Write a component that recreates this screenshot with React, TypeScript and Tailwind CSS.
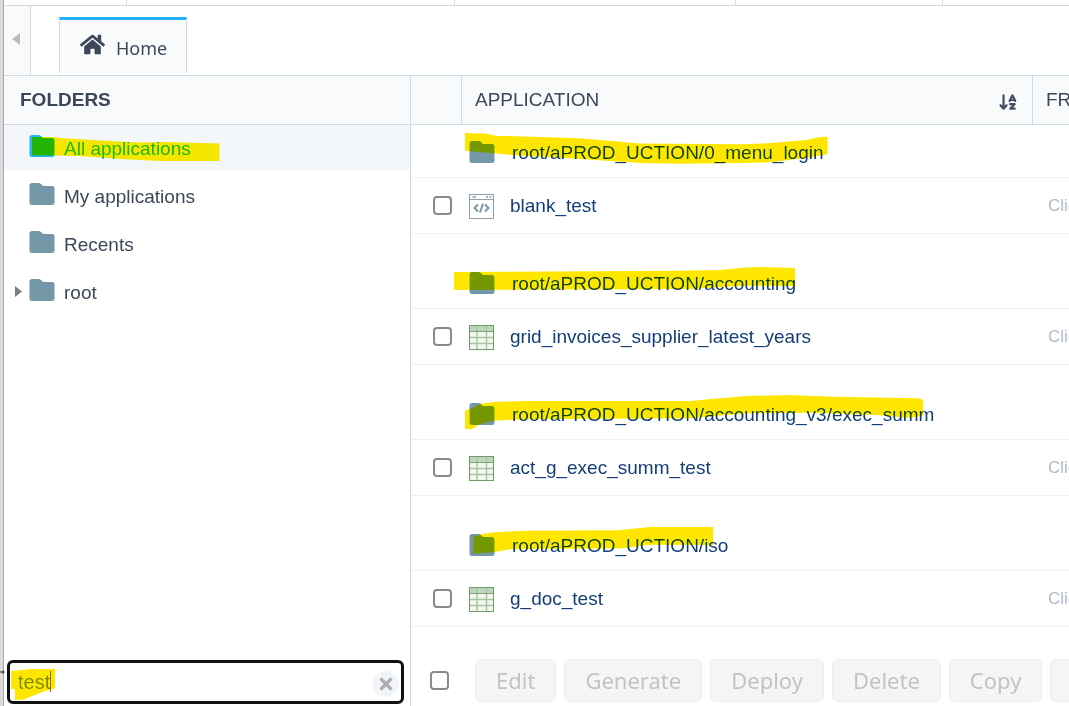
import { useState } from "react";
import { FaHome } from "react-icons/fa";
import { FaArrowDownAZ } from "react-icons/fa6";

type AppKind = "blank" | "grid";

type Group = {
  path: string;
  marker: string;
  app: string;
  kind: AppKind;
};

const folders = ["All applications", "My applications", "Recents", "root"];

const groups: Group[] = [
  {
    path: "root/aPROD_UCTION/0_menu_login",
    marker:
      "M3 8L23 8.5L34 10.7L118 13.3L178 18.5L278 19.3L305 18.3L345 15L358 12L365.5 11.7V29.3L345 32.7L308 37.3L278 38L218 38.7L178 38L118 34L51 30L3 25.7Z",
    app: "blank_test",
    kind: "blank",
  },
  {
    path: "root/aPROD_UCTION/accounting",
    marker:
      "M-8 16L218 14.7L258 14L281 11.7L298 11L333 12V30L281 29.7L248 31.7L228 33L-8 34Z",
    app: "grid_invoices_supplier_latest_years",
    kind: "grid",
  },
  {
    path: "root/aPROD_UCTION/accounting_v3/exec_summ",
    marker:
      "M3 23.7L8 22L20 16.5L35 14.7L65 14H228L258 11.3L285 9L328 8L371 9.7L428 10.7L456 11.3L461 12.7V28.7L448 30.7L415 28L348 25.7L288 26.3L248 29.3L228 31.3L65 32.3L31 33.7L18 37L10 42H3Z",
    app: "act_g_exec_summ_test",
    kind: "grid",
  },
  {
    path: "root/aPROD_UCTION/iso",
    marker:
      "M11.3 18.7L20 16L35 14L65 12.7L155 12.3L188 9H251V27L188 26.7L161 30.3L48 31.3L31 34.3L11.3 35.7Z",
    app: "g_doc_test",
    kind: "grid",
  },
];

const actions = ["Edit", "Generate", "Deploy", "Delete", "Copy", "Move"];

const Marker = ({ d }: { d: string }) => (
  <svg
    aria-hidden="true"
    className="absolute top-0 left-0 h-full w-full overflow-visible mix-blend-darken pointer-events-none"
  >
    <path d={d} fill="#ffe600" />
  </svg>
);

const FolderIcon = ({ color }: { color: string }) => (
  <svg
    aria-hidden="true"
    width="26"
    height="22"
    viewBox="0 0 26 22"
    className="shrink-0"
  >
    <path
      d="M3 0H9.5Q11.5 0 12.5 1.5L14 3H23Q25.5 3 25.5 5.5V19.5Q25.5 22 23 22H3Q.5 22 .5 19.5V2.5Q.5 0 3 0Z"
      fill={color}
    />
  </svg>
);

const AppIcon = ({ kind }: { kind: AppKind }) => {
  if (kind === "blank") {
    return (
      <svg aria-hidden="true" width="25" height="25" className="shrink-0">
        <rect x=".5" y=".5" width="24" height="24" fill="#fff" stroke="#8f9dab" />
        <path d="M1 5.5H24" stroke="#8f9dab" />
        <path d="M3.5 3H7M17 3H19M20.5 3H22.5" stroke="#8f9dab" strokeWidth="1.5" />
        <path
          d="M9 10.5L5.5 14L9 17.5M16 10.5L19.5 14L16 17.5M14 9.5L11 18.5"
          fill="none"
          stroke="#7598a9"
          strokeWidth="2"
        />
      </svg>
    );
  }

  return (
    <svg aria-hidden="true" width="25" height="25" className="shrink-0">
      <rect width="25" height="25" fill="#f3f8ee" />
      <rect width="25" height="6" fill="#bcd6bb" />
      <path d="M8 0V25M17.5 0V25" stroke="#a9c4a2" strokeWidth="1.4" />
      <path d="M0 12.5H25M0 18.5H25" stroke="#a9c4a2" strokeWidth="1.4" />
      <path d="M0 6.5H25" stroke="#7ea476" />
      <rect x=".5" y=".5" width="24" height="24" fill="none" stroke="#719a68" />
    </svg>
  );
};

const Checkbox = ({ label }: { label: string }) => (
  <input
    type="checkbox"
    aria-label={label}
    className="block size-[19px] shrink-0 appearance-none rounded-[4px] border-2 border-[#8a8a8a] bg-white checked:bg-[#22b4ff]"
  />
);

const Sidebar = () => {
  const [search, setSearch] = useState("test");
  const [selected, setSelected] = useState("All applications");

  return (
    <aside className="flex w-[407px] shrink-0 flex-col border-r border-[#cfdbe2]">
      <h2 className="h-[49px] border-b border-[#cfdbe2] bg-[#f9fafc] pl-4 text-[19px] leading-[47px] font-bold text-[#3c4858]">
        FOLDERS
      </h2>
      <ul className="flex flex-col gap-[3px]">
        {folders.map((folder) => {
          const active = folder === selected;
          return (
            <li key={folder} className="relative">
              <button
                type="button"
                onClick={() => setSelected(folder)}
                className={
                  active
                    ? "flex h-[45px] w-full items-center bg-[#f3f7fa] text-left text-[19px] text-[#22b4ff]"
                    : "flex h-[45px] w-full items-center text-left text-[19px] text-[#3c4858]"
                }
              >
                <span className="flex w-[25px] justify-end pr-[7px]">
                  {folder === "root" && (
                    <svg aria-hidden="true" width="7" height="11">
                      <path d="M0 0L7 5.5L0 11Z" fill="#7d7d7d" />
                    </svg>
                  )}
                </span>
                <span className="pb-[3px]">
                  <FolderIcon color={active ? "#22b4ff" : "#7598a9"} />
                </span>
                <span className="pt-[3px] pl-[9px]">{folder}</span>
              </button>
              {folder === "All applications" && (
                <Marker d="M28 12H50L56 13L106 16L136 17.5L161 17L215.5 18.5V36H156L116 34L76 31L50 30.5H28Z" />
              )}
            </li>
          );
        })}
      </ul>
      <div className="mt-auto pr-[6px] pb-[2px] pl-[3px]">
        <div className="relative flex h-11 items-center rounded-[6px] border-[3px] border-[#101211] pr-[2px] pl-2">
          <input
            type="text"
            aria-label="Search applications"
            value={search}
            onChange={(e) => setSearch(e.target.value)}
            className="h-full min-w-0 flex-1 bg-transparent text-[20px] text-[#848484] outline-none"
          />
          <button
            type="button"
            aria-label="Clear search"
            onClick={() => setSearch("")}
            className="mt-1 grid size-[26px] place-items-center rounded-full bg-[#f1f5f9]"
          >
            <svg width="14" height="14" aria-hidden="true">
              <path d="M1.5 1.5L12.5 12.5M12.5 1.5L1.5 12.5" stroke="#adadad" strokeWidth="3.4" />
            </svg>
          </button>
          <svg
            aria-hidden="true"
            className="absolute -top-[3px] -left-[3px] h-full w-full overflow-visible mix-blend-darken pointer-events-none"
          >
            <path
              d="M4.3 11L23 9H48V28.3L36 31.7L28 35L16 39.7H8V29H4.3Z"
              fill="#ffe600"
            />
            <path d="M43.5 11V32" stroke="#777700" />
          </svg>
        </div>
      </div>
    </aside>
  );
};

const Applications = () => (
  <main className="flex min-w-0 flex-1 flex-col overflow-hidden">
    <table className="w-full min-w-[900px] table-fixed border-separate border-spacing-0 text-left text-[19px]">
      <colgroup>
        <col className="w-[51px]" />
        <col className="w-[571px]" />
        <col />
      </colgroup>
      <thead>
        <tr className="h-[49px] bg-[#f9fafc] text-[#3c4858] [&>th]:border-b [&>th]:border-[#cfdbe2]">
          <th className="border-r" aria-label="Select" />
          <th className="border-r pr-[14px] pl-[13px] font-normal">
            <div className="flex items-center justify-between">
              APPLICATION
              <button type="button" aria-label="Sort by application" className="pt-1">
                <FaArrowDownAZ size={20} color="#445062" />
              </button>
            </div>
          </th>
          <th className="pl-[13px] font-normal whitespace-nowrap">FRIENDLY URL</th>
        </tr>
      </thead>
      {groups.map((group, i) => (
        <tbody
          key={group.path}
          className="text-[#143e78] [&_td]:border-b [&_td]:border-[#eef0f3]"
        >
          <tr>
            <td />
            <td colSpan={2} className={i === 0 ? "" : "pt-[22px]"}>
              <div className="relative flex h-[52px] items-center pt-[2px] pl-[7px]">
                <FolderIcon color="#7598a9" />
                <span className="pt-[3px] pl-[17px]">{group.path}</span>
                <Marker d={group.marker} />
              </div>
            </td>
          </tr>
          <tr className="h-14">
            <td className="pl-[22px]">
              <Checkbox label={"Select " + group.app} />
            </td>
            <td className="pt-[2px] pl-[7px]">
              <a href="#" className="flex items-center gap-4">
                <AppIcon kind={group.kind} />
                {group.app}
              </a>
            </td>
            <td className="pl-[15px] text-[17px] text-[#adbbcd]">Click to edit</td>
          </tr>
        </tbody>
      ))}
    </table>
    <div className="mt-auto flex items-center pt-8 pb-1 pl-[19px]">
      <Checkbox label="Select all" />
      <div className="flex gap-2 pl-[26px]">
        {actions.map((action) => (
          <button
            key={action}
            type="button"
            disabled
            className="h-[43px] shrink-0 rounded-[6px] border border-[#eeeeee] bg-[#f5f5f5] px-5 font-['Noto_Sans',sans-serif] text-[22px] text-[#c3c3c3]"
          >
            {action}
          </button>
        ))}
      </div>
    </div>
  </main>
);

const App = () => {
  return (
    <div className="flex min-h-screen overflow-hidden bg-white font-['Liberation_Sans',Arial,sans-serif]">
      <div className="flex w-1 shrink-0 flex-col justify-end border-r border-[#aaaaaa] bg-[#dcdbda] pb-[32px]">
        <svg width="4" height="4" aria-hidden="true" className="overflow-visible">
          <circle cx="0" cy="2" r="1" fill="#555" />
          <circle cx="3" cy="2" r="1.5" fill="#444" />
        </svg>
      </div>
      <div className="flex min-w-0 flex-1 flex-col">
        <div className="flex h-[6px] border-b border-[#cfdbe2]">
          <div className="w-[123px] border-r border-[#cfdbe2]" />
          <div className="w-[328px] border-r border-[#cfdbe2]" />
          <div className="w-[281px] border-r border-[#cfdbe2]" />
          <div className="w-[207px] border-r border-[#cfdbe2]" />
        </div>
        <nav className="flex h-[70px] border-b border-[#cfdbe2]">
          <button
            type="button"
            aria-label="Scroll tabs left"
            className="flex w-[27px] justify-center border-r border-[#cfdbe2] bg-[#f9fafc] pt-[27px] pr-[2px]"
          >
            <svg width="8" height="12" aria-hidden="true">
              <path d="M8 0V12L0 6Z" fill="#bdbdbd" />
            </svg>
          </button>
          <a
            href="#"
            className="mt-[11px] mb-[2px] ml-7 flex w-32 items-center border-x border-t-[3px] border-x-[#cfdbe2] border-t-[#22b4ff] bg-[#f9fafc] pl-[20px] font-['Noto_Sans',sans-serif] text-[18px] text-[#3c4858]"
          >
            <FaHome size={25} className="mb-1" />
            <span className="pt-1 pl-[11px]">Home</span>
          </a>
        </nav>
        <div className="flex flex-1">
          <Sidebar />
          <Applications />
        </div>
      </div>
    </div>
  );
};

export default App;
